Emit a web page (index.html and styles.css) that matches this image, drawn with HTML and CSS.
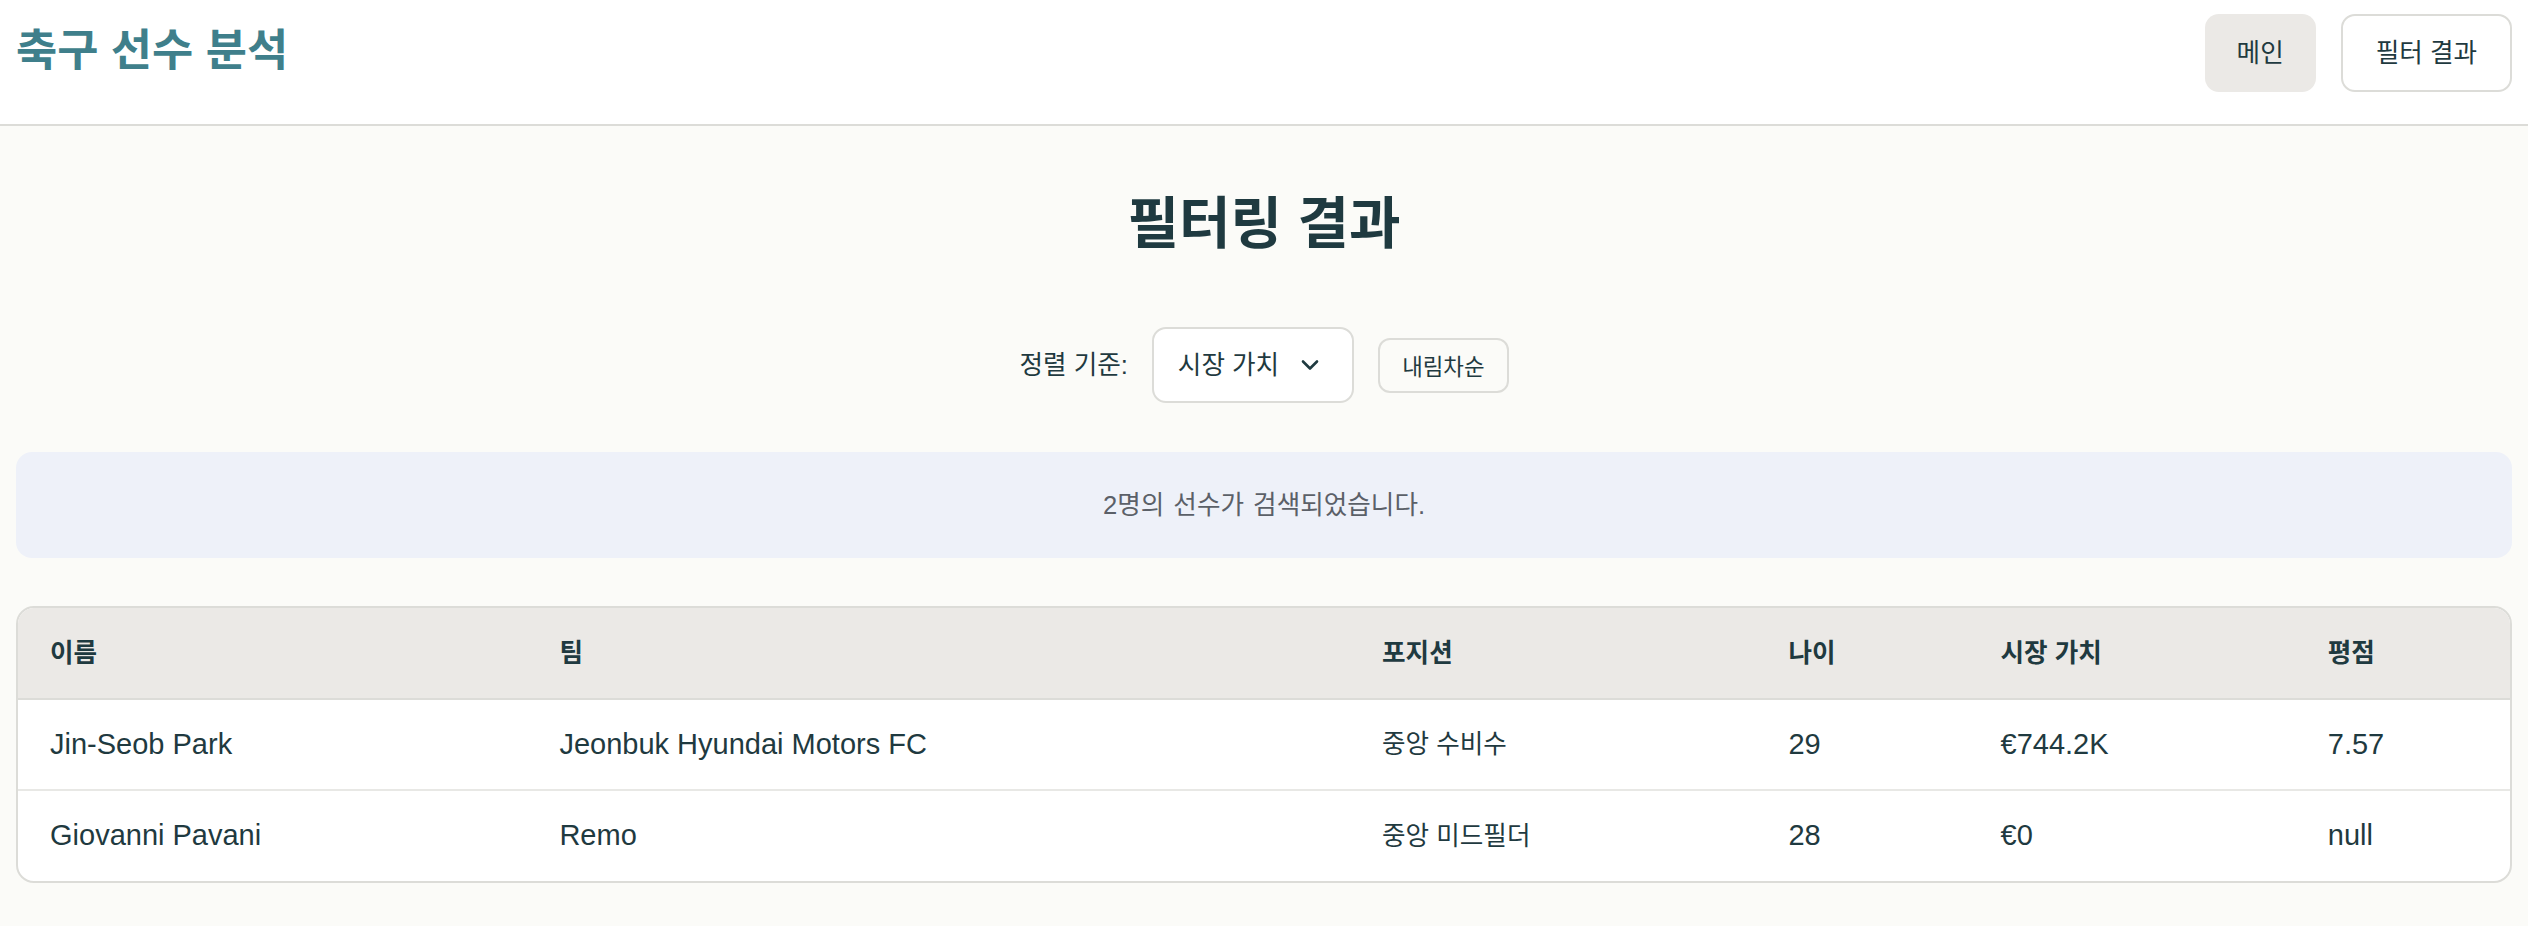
FILE: index.html
```html
<!DOCTYPE html>
<html lang="ko">
<head>
<meta charset="utf-8">
<title>축구 선수 분석</title>
<link rel="stylesheet" href="styles.css">
</head>
<body>
<header class="topbar">
  <div class="brand">축구 선수 분석</div>
  <nav class="nav">
    <a class="nav-btn nav-btn-active">메인</a>
    <a class="nav-btn nav-btn-outline">필터 결과</a>
  </nav>
</header>
<main class="content">
  <h1 class="page-title">필터링 결과</h1>
  <div class="sort-row">
    <span class="sort-label">정렬 기준:</span>
    <div class="select">
      <span>시장 가치</span>
      <svg class="chevron" width="18" height="12" viewBox="0 0 18 12"><path d="M2 2.5 L9 9.5 L16 2.5" fill="none" stroke="#1f3a40" stroke-width="2.6" stroke-linecap="round" stroke-linejoin="round"/></svg>
    </div>
    <button class="order-btn">내림차순</button>
  </div>
  <div class="info-box">2명의 선수가 검색되었습니다.</div>
  <div class="table-wrap">
    <table class="players">
      <thead>
        <tr>
          <th class="c-name">이름</th>
          <th class="c-team">팀</th>
          <th class="c-pos">포지션</th>
          <th class="c-age">나이</th>
          <th class="c-val">시장 가치</th>
          <th class="c-rate">평점</th>
        </tr>
      </thead>
      <tbody>
        <tr>
          <td class="lat">Jin-Seob Park</td>
          <td class="lat">Jeonbuk Hyundai Motors FC</td>
          <td>중앙 수비수</td>
          <td class="lat">29</td>
          <td class="lat">€744.2K</td>
          <td class="lat">7.57</td>
        </tr>
        <tr>
          <td class="lat">Giovanni Pavani</td>
          <td class="lat">Remo</td>
          <td>중앙 미드필더</td>
          <td class="lat">28</td>
          <td class="lat">€0</td>
          <td class="lat">null</td>
        </tr>
      </tbody>
    </table>
  </div>
</main>
</body>
</html>
```

FILE: styles.css
```css
* { box-sizing: border-box; }
html, body { margin: 0; padding: 0; }
body {
  background: #fbfbf8;
  color: #1f3a40;
  font-family: "Liberation Sans", "Noto Sans CJK KR", sans-serif;
  font-size: 25.6px;
  line-height: 1.5;
}
.topbar {
  height: 126px;
  background: #ffffff;
  border-bottom: 2px solid #dcdcd8;
  display: flex;
  justify-content: space-between;
  align-items: flex-start;
  padding: 14px 16px 0 16px;
}
.brand {
  color: #3f7f8b;
  font-size: 44.8px;
  font-weight: 700;
  line-height: 72px;
}
.nav { display: flex; gap: 25px; }
.nav-btn {
  display: flex;
  align-items: center;
  justify-content: center;
  height: 78px;
  padding: 0 30px;
  border-radius: 14px;
  font-size: 25.6px;
  color: #1f3a40;
  border: 2px solid transparent;
}
.nav-btn-active { background: #ebe9e6; }
.nav-btn-outline { background: #ffffff; border-color: #dcdcd8; padding: 0 33px; }
.content { padding: 64px 16px 40px 16px; }
.page-title {
  margin: 0 0 70px 0;
  text-align: center;
  font-size: 56px;
  line-height: 67px;
  font-weight: 700;
  color: #1f3a40;
}
.sort-row {
  display: flex;
  justify-content: center;
  align-items: center;
  gap: 24px;
}
.sort-label { font-size: 25.6px; }
.select {
  display: flex;
  align-items: center;
  gap: 22px;
  height: 76px;
  padding: 0 33px 0 24px;
  background: #ffffff;
  border: 2px solid #dcdcd8;
  border-radius: 14px;
}
.chevron { display: block; }
.order-btn {
  height: 55px;
  padding: 0 22px;
  font-family: inherit;
  font-size: 22.4px;
  color: #1f3a40;
  background: #fbfbf8;
  border: 2px solid #dcdcd8;
  border-radius: 12px;
}
.info-box {
  margin-top: 49px;
  height: 106px;
  display: flex;
  align-items: center;
  justify-content: center;
  background: #eef1f9;
  border-radius: 16px;
  color: #5b6068;
  word-spacing: 2px;
}
.table-wrap {
  margin-top: 48px;
  border: 2px solid #dcdcd8;
  border-radius: 18px;
  overflow: hidden;
  background: #ffffff;
}
.players {
  width: 100%;
  border-collapse: collapse;
  table-layout: fixed;
}
.players th, .players td {
  text-align: left;
  padding: 0 0 0 32px;
  height: 91px;
}
.players th {
  background: #ebe9e6;
  font-weight: 700;
  border-bottom: 2px solid #dcdcd8;
}
.players td { font-weight: 400; }
.players td.lat { font-size: 29px; }
.players tbody tr + tr td { border-top: 2px solid #e8e8e5; }
.c-name { width: 509px; }
.c-team { width: 822px; }
.c-pos { width: 406px; }
.c-age { width: 212px; }
.c-val { width: 327px; }
.c-rate { width: 214px; }
```
